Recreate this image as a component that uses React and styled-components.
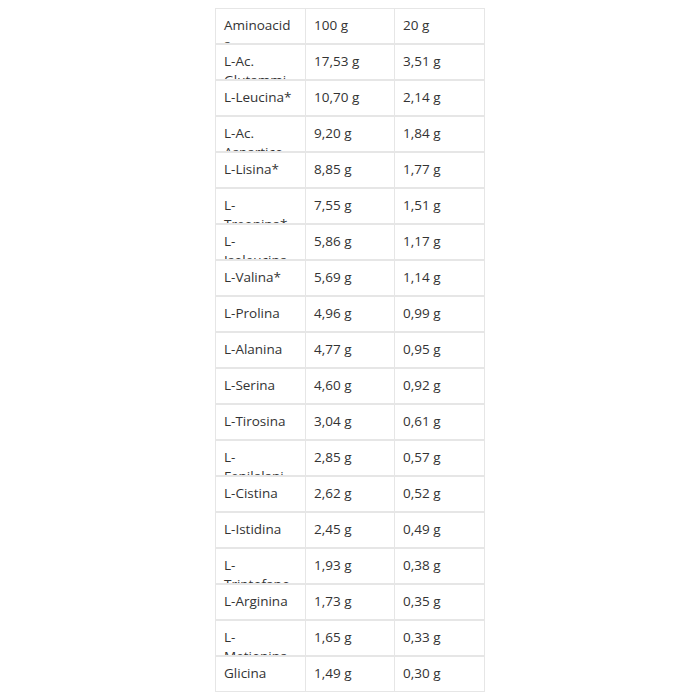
import React from "react";
import styled, { createGlobalStyle } from "styled-components";

const GlobalStyle = createGlobalStyle`
  body {
    margin: 8px;
    background: #fff;
    font-family: "Open Sans", "Liberation Sans", sans-serif;
  }
`;

const rows = [
  ["Aminoacids", "100 g", "20 g"],
  ["L-Ac. Glutammico", "17,53 g", "3,51 g"],
  ["L-Leucina*", "10,70 g", "2,14 g"],
  ["L-Ac. Aspartico", "9,20 g", "1,84 g"],
  ["L-Lisina*", "8,85 g", "1,77 g"],
  ["L-Treonina*", "7,55 g", "1,51 g"],
  ["L-Isoleucina*", "5,86 g", "1,17 g"],
  ["L-Valina*", "5,69 g", "1,14 g"],
  ["L-Prolina", "4,96 g", "0,99 g"],
  ["L-Alanina", "4,77 g", "0,95 g"],
  ["L-Serina", "4,60 g", "0,92 g"],
  ["L-Tirosina", "3,04 g", "0,61 g"],
  ["L-Fenilalanina*", "2,85 g", "0,57 g"],
  ["L-Cistina", "2,62 g", "0,52 g"],
  ["L-Istidina", "2,45 g", "0,49 g"],
  ["L-Triptofano*", "1,93 g", "0,38 g"],
  ["L-Arginina", "1,73 g", "0,35 g"],
  ["L-Metionina*", "1,65 g", "0,33 g"],
  ["Glicina", "1,49 g", "0,30 g"],
];

const Table = styled.div`
  width: 270px;
  margin: 0 auto;
  display: grid;
  grid-template-columns: 89px 88px 89px;
  column-gap: 1px;
  row-gap: 2px;
  background: #e6e6e6;
  border: 1px solid #e6e6e6;
  box-sizing: border-box;
`;

const Cell = styled.div`
  height: 34px;
  box-sizing: border-box;
  padding: 7px 13px 0 8px;
  background: #fff;
  overflow: hidden;
  font-size: 13.5px;
  line-height: 18.5px;
  color: #333;
  overflow-wrap: break-word;
  word-break: break-word;
`;

export default function App() {
  return (
    <>
      <GlobalStyle />
      <Table>
        {rows.map((r, i) =>
          r.map((c, j) => <Cell key={`${i}-${j}`}>{c}</Cell>)
        )}
      </Table>
    </>
  );
}
